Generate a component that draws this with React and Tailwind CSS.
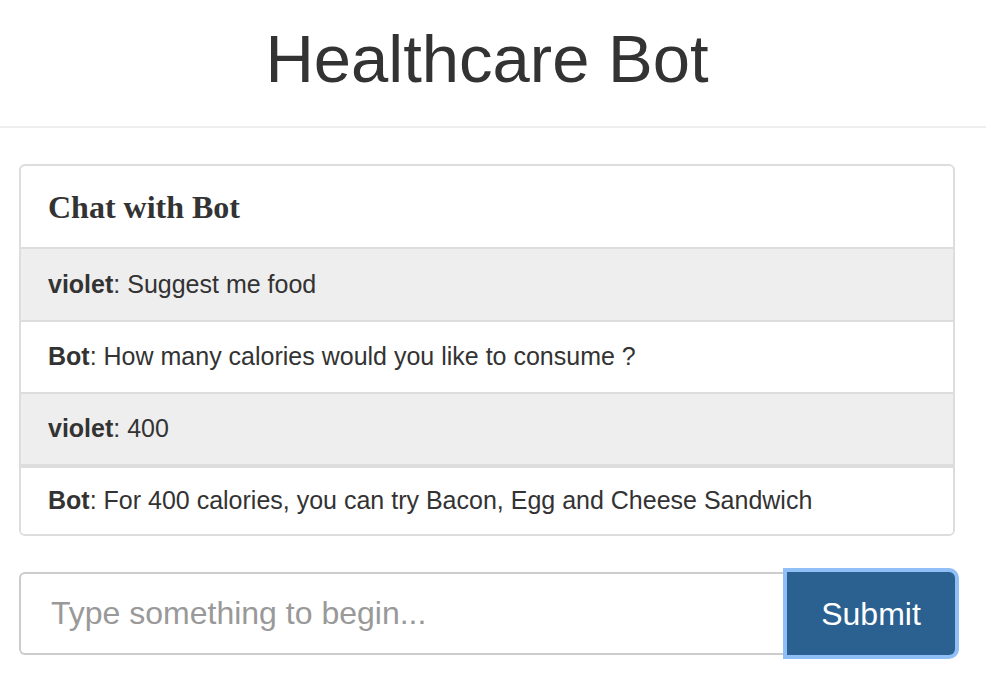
export default function App() {
  const messages = [
    { who: 'violet', text: 'Suggest me food', gray: true },
    { who: 'Bot', text: 'How many calories would you like to consume ?', gray: false },
    { who: 'violet', text: '400', gray: true },
    { who: 'Bot', text: 'For 400 calories, you can try Bacon, Egg and Cheese Sandwich', gray: false },
  ]

  return (
    <div className="min-h-screen bg-white font-['Liberation_Sans',Arial,sans-serif] text-[#333]">
      {/* Page header */}
      <header className="h-[128px] border-b-2 border-[#eee] flex items-center justify-center pb-[9px] pr-[12px]">
        <h1 className="text-[67px] leading-none">Healthcare Bot</h1>
      </header>

      <main className="ml-[19px] w-[936px] pt-[36px]">
        {/* Chat panel */}
        <div className="border-2 border-[#ddd] rounded-[6px] overflow-hidden">
          <div className="h-[83px] flex items-center px-[27px] border-b-2 border-[#ddd]">
            <h3 className="font-['Liberation_Serif','Times_New_Roman',serif] font-bold text-[32px] leading-none text-[#333]">
              Chat with Bot
            </h3>
          </div>
          {messages.map((m, i) => (
            <div
              key={i}
              className={`flex items-center px-[27px] text-[25px] ${m.gray ? 'bg-[#eee]' : 'bg-white'} ${
                i === 0 ? 'h-[71px]' : i === 3 ? 'h-[70px] border-t-4 border-[#ddd]' : 'h-[72px] border-t-2 border-[#ddd]'
              }`}
            >
              <p>
                <b>{m.who}</b>: {m.text}
              </p>
            </div>
          ))}
        </div>

        {/* Input group */}
        <div className="mt-[36px] flex h-[83px]">
          <input
            type="text"
            placeholder="Type something to begin..."
            className="flex-1 min-w-0 h-full border-2 border-r-0 border-[#ccc] rounded-l-[6px] px-[30px] text-[32px] text-[#555] placeholder:text-[#999] outline-none"
          />
          <button className="w-[168px] h-full bg-[#2b6190] text-white text-[32px] rounded-r-[6px] shadow-[0_0_0_4px_#8fbff6]">
            Submit
          </button>
        </div>
      </main>
    </div>
  )
}
